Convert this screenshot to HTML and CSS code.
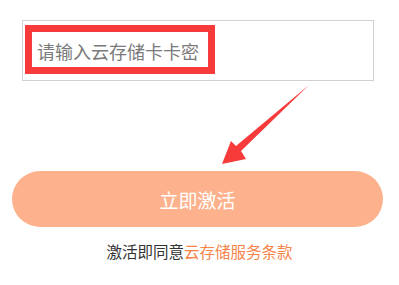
FILE: index.html
```html
<!DOCTYPE html>
<html lang="zh">
<head>
<meta charset="utf-8">
<link rel="stylesheet" href="styles.css">
</head>
<body>
<div class="page">
  <div class="input-box">
    <span class="mark"><span class="placeholder">请输入云存储卡卡密</span></span>
  </div>
  <button class="activate">立即激活</button>
  <p class="agree">激活即同意<span class="link">云存储服务条款</span></p>
  <svg class="arrow" width="399" height="285" viewBox="0 0 399 285">
    <polygon points="309,85 241,151 246,159 222,164 231,141 236,146" fill="#f73a3a"/>
  </svg>
</div>
</body>
</html>
```
FILE: styles.css
```css
html, body {
  margin: 0;
  padding: 0;
  background: #ffffff;
}
.page {
  position: relative;
  width: 399px;
  height: 285px;
  padding-top: 20px;
  box-sizing: border-box;
  font-family: "Noto Sans CJK SC", "Noto Sans", sans-serif;
}
.input-box {
  margin-left: 22px;
  width: 352px;
  height: 61px;
  box-sizing: border-box;
  border: 1px solid #d2d2d2;
  padding: 4px 0 0 2px;
}
.mark {
  display: flex;
  align-items: center;
  width: 190px;
  height: 49px;
  box-sizing: border-box;
  border: 7px solid #f73a3a;
  padding-left: 5px;
}
.placeholder {
  font-size: 18px;
  line-height: 1;
  color: #7a7a7a;
  letter-spacing: 0;
  padding-top: 2px;
}
.activate {
  display: block;
  margin: 90px 0 0 12px;
  width: 371px;
  height: 56px;
  border: none;
  border-radius: 28px;
  background: #fdb28d;
  color: #ffffff;
  font-family: inherit;
  font-size: 19px;
  padding: 0;
}
.agree {
  margin: 15px 0 0 0;
  text-align: center;
  font-size: 15.5px;
  line-height: 18px;
  color: #333333;
}
.link {
  color: #f7844a;
}
.arrow {
  position: absolute;
  left: 0;
  top: 0;
  pointer-events: none;
}
```
